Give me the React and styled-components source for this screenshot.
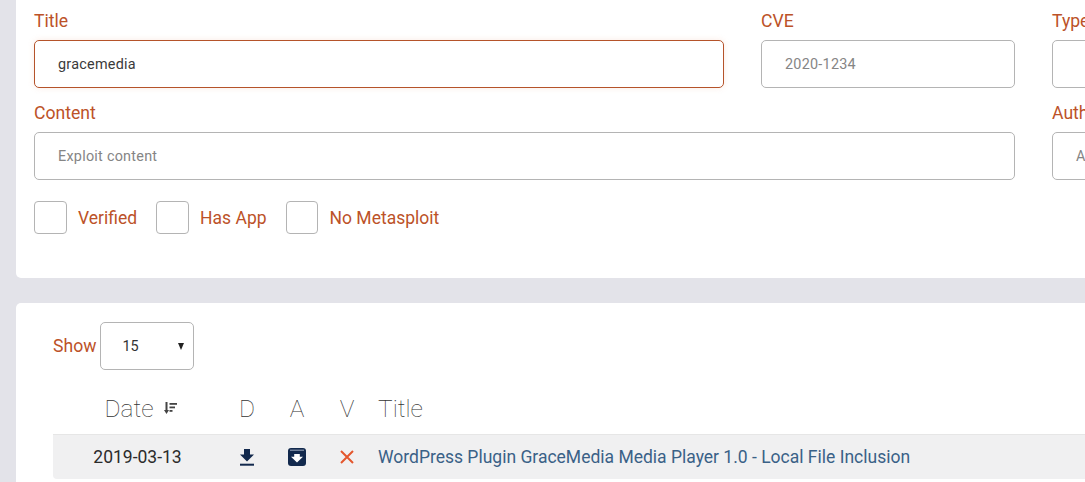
import styled, { createGlobalStyle } from "styled-components";

const GlobalStyle = createGlobalStyle`
  html, body {
    margin: 0;
    padding: 0;
    height: 482px;
    overflow: hidden;
    background: #e3e3e9;
    font-family: Roboto, "Liberation Sans", sans-serif;
  }
`;

const Page = styled.div`
  width: 1200px;
  height: 482px;
  padding-left: 16px;
  box-sizing: border-box;
  overflow: hidden;
`;

const Card = styled.div`
  background: #fff;
  border-radius: 5px;
`;

const FilterCard = styled(Card)`
  height: 278px;
  padding: 8px 0 0 18px;
  box-sizing: border-box;
  border-radius: 0 0 5px 5px;
  margin-bottom: 25px;
`;

const FieldGrid = styled.div`
  display: grid;
  grid-template-columns: 690px 254px 254px;
  column-gap: 37px;
  row-gap: 0;
`;

const Field = styled.div`
  grid-column: ${(p) => p.$span || "auto"};
  height: 92px;
`;

const Label = styled.div`
  font-size: 17.6px;
  line-height: 26px;
  height: 32px;
  color: #bc5228;
`;

const Input = styled.div`
  height: 48px;
  box-sizing: border-box;
  border: 1px solid ${(p) => (p.$focused ? "#b5532a" : "#b4b4b4")};
  border-radius: 5px;
  padding-left: 23px;
  display: flex;
  align-items: center;
  font-size: 14.4px;
  letter-spacing: 0.25px;
  color: ${(p) => (p.$value ? "#3a3a3a" : "#858585")};
  box-shadow: ${(p) => (p.$focused ? "0 0 6px rgba(232, 150, 110, 0.18)" : "none")};
`;

const Checks = styled.div`
  display: flex;
  align-items: center;
  margin-top: 9px;
`;

const Check = styled.div`
  display: flex;
  align-items: center;
  margin-right: 19px;
`;

const Box = styled.div`
  width: ${(p) => (p.$narrow ? 32 : 33)}px;
  height: 33px;
  box-sizing: border-box;
  border: 1px solid #b4b4b4;
  border-radius: 4px;
  margin-right: ${(p) => (p.$narrow ? 12 : 11)}px;
`;

const CheckLabel = styled.span`
  font-size: 17.5px;
  color: #bc5228;
`;

const ResultCard = styled(Card)`
  height: 179px;
  padding: 19px 0 0 37px;
  box-sizing: border-box;
  border-radius: 5px 5px 0 0;
`;

const ShowRow = styled.div`
  display: flex;
  align-items: center;
  height: 48px;
`;

const ShowLabel = styled.span`
  font-size: 17.6px;
  color: #bc5228;
  margin-right: 4px;
`;

const Select = styled.div`
  width: 94px;
  height: 48px;
  box-sizing: border-box;
  border: 1px solid #b4b4b4;
  border-radius: 5px;
  padding: 0 9px 0 21px;
  display: flex;
  align-items: center;
  justify-content: space-between;
  font-size: 14.4px;
  color: #333;
`;

const Caret = styled.span`
  width: 0;
  height: 0;
  border-left: 3.5px solid transparent;
  border-right: 3.5px solid transparent;
  border-top: 7px solid #222;
`;

const Columns = styled.div`
  display: grid;
  grid-template-columns: 169px 50px 50px 50px 1fr;
  align-items: center;
`;

const HeadRow = styled(Columns)`
  height: 64px;
  padding-top: 12px;
  box-sizing: border-box;
`;

const HeadCell = styled.div`
  font-size: 24.5px;
  font-weight: 100;
  color: #333;
  display: flex;
  align-items: center;
  justify-content: ${(p) => (p.$left ? "flex-start" : "center")};
  padding-left: ${(p) => (p.$left ? "6px" : "0")};
`;

const DateHead = styled(HeadCell)`
  padding-left: 6px;
  gap: 10px;
`;

const DataRow = styled(Columns)`
  height: 45px;
  background: #f0f0f1;
  border-top: 1px solid #e6e6e6;
  box-sizing: border-box;
  border-radius: 0 0 0 4px;
`;

const DateCell = styled.div`
  font-size: 17.5px;
  color: #2b2b2b;
  text-align: center;
`;

const IconCell = styled.div`
  display: flex;
  align-items: center;
  justify-content: center;
`;

const TitleLink = styled.a`
  font-size: 17.5px;
  color: #3a6187;
  text-decoration: none;
  white-space: nowrap;
  padding-left: 6px;
`;

const SortIcon = () => (
  <svg width="13" height="12" viewBox="0 0 13 12" fill="#444">
    <path d="M1.5 0h2v8h1.5L2.5 12 0 8h1.5z" />
    <rect x="5.5" y="1" width="7.5" height="1.8" />
    <rect x="5.5" y="4.5" width="5.5" height="1.8" />
    <rect x="5.5" y="8" width="3" height="1.8" />
  </svg>
);

const DownloadIcon = () => (
  <svg width="14" height="17" viewBox="0 0 14 17" fill="#12294d">
    <path d="M4 0h6v5.5h4L7 12.5 0 5.5h4z" />
    <rect x="0" y="14.7" width="14" height="2" />
  </svg>
);

const ArchiveIcon = () => (
  <svg width="18" height="18" viewBox="0 0 18 18">
    <rect x="0" y="0" width="18" height="18" rx="3" fill="#12294d" />
    <rect x="2" y="1.6" width="14" height="1.3" fill="#7d8ba3" />
    <path d="M6.2 6h5.6v2.8h3.2L9 14.6 3 8.8h3.2z" fill="#fff" />
  </svg>
);

const CrossIcon = () => (
  <svg width="14" height="14" viewBox="0 0 14 14" stroke="#e4572e" strokeWidth="2" fill="none">
    <path d="M1 1l12 12M13 1L1 13" />
  </svg>
);

const App = () => {
  return (
    <Page>
      <GlobalStyle />
      <FilterCard>
        <FieldGrid>
          <Field>
            <Label>Title</Label>
            <Input $focused $value>gracemedia</Input>
          </Field>
          <Field>
            <Label>CVE</Label>
            <Input>2020-1234</Input>
          </Field>
          <Field>
            <Label>Type</Label>
            <Input />
          </Field>
          <Field $span="1 / span 2">
            <Label>Content</Label>
            <Input>Exploit content</Input>
          </Field>
          <Field>
            <Label>Author</Label>
            <Input>Author</Input>
          </Field>
        </FieldGrid>
        <Checks>
          <Check>
            <Box />
            <CheckLabel>Verified</CheckLabel>
          </Check>
          <Check>
            <Box />
            <CheckLabel>Has App</CheckLabel>
          </Check>
          <Check>
            <Box $narrow />
            <CheckLabel>No Metasploit</CheckLabel>
          </Check>
        </Checks>
      </FilterCard>
      <ResultCard>
        <ShowRow>
          <ShowLabel>Show</ShowLabel>
          <Select>
            15
            <Caret />
          </Select>
        </ShowRow>
        <HeadRow>
          <DateHead>
            Date
            <SortIcon />
          </DateHead>
          <HeadCell>D</HeadCell>
          <HeadCell>A</HeadCell>
          <HeadCell>V</HeadCell>
          <HeadCell $left>Title</HeadCell>
        </HeadRow>
        <DataRow>
          <DateCell>2019-03-13</DateCell>
          <IconCell>
            <DownloadIcon />
          </IconCell>
          <IconCell>
            <ArchiveIcon />
          </IconCell>
          <IconCell>
            <CrossIcon />
          </IconCell>
          <TitleLink href="#">WordPress Plugin GraceMedia Media Player 1.0 - Local File Inclusion</TitleLink>
        </DataRow>
      </ResultCard>
    </Page>
  );
};

export default App;
